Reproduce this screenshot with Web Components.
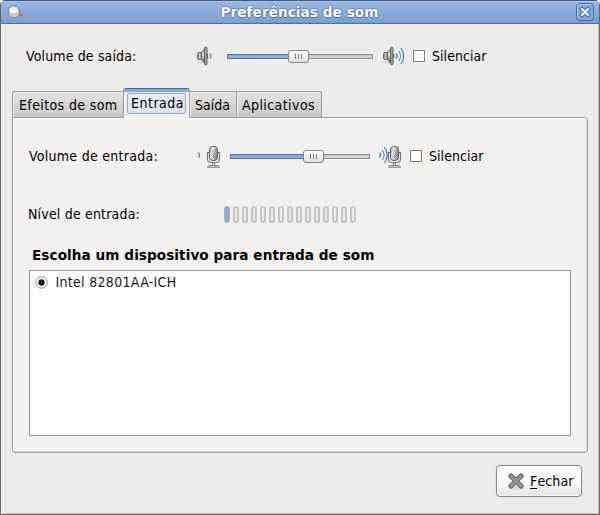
<!DOCTYPE html>
<html lang="pt-BR">
<head>
<meta charset="utf-8">
<title>Preferências de som</title>
<style>
body{margin:0;background:#fff;overflow:hidden;font:14px/18px "DejaVu Sans Condensed","DejaVu Sans",sans-serif;color:#000}
</style>
</head>
<body>
<sound-window></sound-window>
<script>
const define=(name,markup,setup)=>{
  const t=document.createElement('template');t.innerHTML=markup;
  customElements.define(name,class extends HTMLElement{
    connectedCallback(){
      if(this.shadowRoot)return;
      const r=this.attachShadow({mode:'open'});
      if(setup)setup(this,r,t);else r.append(t.content.cloneNode(true));
    }
  });
};
const build=(r,t)=>r.append(t.content.cloneNode(true));

/* Text label; the w attribute is the width the text is spaced to. */
define('ui-label',`<style>:host{display:block;white-space:pre}:host([bold]){font:bold 13.6px/18px "DejaVu Sans",sans-serif}span{display:inline-block}u{text-decoration:none;border-bottom:1px solid #000;display:inline-block;line-height:14px}</style><span></span>`,(h,r,t)=>{
  build(r,t);
  const s=r.querySelector('span'),text=h.getAttribute('text'),w=+h.getAttribute('w');
  if(h.hasAttribute('mnemonic')){const u=document.createElement('u');u.textContent=text[0];s.append(u,text.slice(1))}
  else s.textContent=text;
  s.style.letterSpacing=(w-s.getBoundingClientRect().width)/text.length+'px';
});

define('ui-slider',`<style>
:host{display:block;height:13px}
.g{display:grid;align-items:center;height:13px}
.track{grid-area:1/1;height:5px;box-sizing:border-box;border:1px solid #888a86;background:linear-gradient(#c5c5c3,#dededc);box-shadow:0 0 0 1px #f7f7f5}
.fill{grid-area:1/1;height:5px;box-sizing:border-box;border:1px solid #4a71a5;background:linear-gradient(#82a8dc,#98b8e4)}
.handle{grid-area:1/1;width:21px;height:13px;box-sizing:border-box;border:1px solid #858681;border-radius:3px;background:linear-gradient(#fff,#efefed 55%,#dfdfdd);display:flex;gap:2px;justify-content:center;align-items:center;z-index:1}
i{width:1px;height:5px;background:#7c7d79}
</style><div class="g"><div class="track"></div><div class="fill"></div><div class="handle"><i></i><i></i><i></i></div></div>`,(h,r,t)=>{
  build(r,t);const v=+h.getAttribute('value');
  r.querySelector('.fill').style.width=v+8+'px';
  r.querySelector('.handle').style.marginLeft=v+'px';
});

define('ui-check',`<style>:host{display:block;width:12px;height:12px;box-sizing:border-box;border:1px solid #74756f;background:#fff;box-shadow:0 0 0 1px #f8f8f7}</style>`);

define('ui-radio',`<style>:host{display:block;width:13px;height:13px}svg{display:block}</style><svg width="13" height="13"><circle cx="6.5" cy="6.5" r="5.7" fill="#fff" stroke="#92938f"/><circle cx="6.5" cy="6.5" r="3.2" fill="#1d1f20"/></svg>`);

const waves=(n,x,y)=>{
  let p='';const a=[[0,2.6,2],[2.6,5.2,4],[5,8,5.4]];
  for(let i=0;i<n;i++){const [d,h,b]=a[i];p+=`<path d="M${x+d} ${y-h}Q${x+d+b} ${y} ${x+d} ${y+h}" fill="none" stroke="${i===1?'#6d90c6':'#4c77b4'}" stroke-width="1.2"/>`}
  return p;
};
define('ui-speaker','<style>:host{display:block}svg{display:block}</style>',(h,r,t)=>{
  build(r,t);
  r.innerHTML+=`<svg width="23" height="20"><defs><linearGradient id="b"><stop stop-color="#50544e"/><stop offset=".5" stop-color="#d8dad5"/><stop offset="1" stop-color="#555a54"/></linearGradient><linearGradient id="c" x2="0" y2="1"><stop stop-color="#8c9188"/><stop offset=".45" stop-color="#e4e6e2"/><stop offset="1" stop-color="#2d322d"/></linearGradient></defs>
  <ellipse cx="6" cy="16" rx="6" ry="1.6" fill="#000" opacity=".09"/>
  <path d="M1 6.500Q-.3 10 1 13.500H5V6.500Z" fill="url(#b)" stroke="#5b5f59" stroke-width=".8"/>
  <path d="M4.500 6.500L8.500 2V18L4.500 13.500Z" fill="url(#c)" stroke="#50554d" stroke-width=".8"/>
  <rect x="7.600" y="1" width="2.400" height="18" rx="1.200" fill="#a6aaa0" stroke="#484d46" stroke-width=".8"/>
  <path d="M10.300 7.500Q12.300 10 10.300 13Z" fill="#2e332e"/>${waves(+h.getAttribute('level'),13,10)}</svg>`;
});
define('ui-mic','<style>:host{display:block}svg{display:block}</style>',(h,r,t)=>{
  build(r,t);
  r.innerHTML+=`<svg width="24" height="23"><defs><linearGradient id="m" x2="1" y2=".3"><stop stop-color="#7c8086"/><stop offset=".35" stop-color="#f6f7f8"/><stop offset="1" stop-color="#8b9096"/></linearGradient><pattern id="d" width="2" height="2" patternUnits="userSpaceOnUse"><path d="M0 0h1v1h-1zM1 1h1v1h-1z" fill="#50565c" opacity=".28"/></pattern></defs>
  <g transform="translate(-1 0)"><path d="M10.500 7.500V14Q10.500 17.500 14 17.500H19Q22.500 17.500 22.500 14V7.500" fill="none" stroke="#777a76" stroke-width="1.200"/>
  <rect x="12.500" y="1.500" width="8" height="14" rx="3.200" fill="url(#m)" stroke="#54585d"/><rect x="14" y="4" width="6" height="9" fill="url(#d)"/>
  <path d="M10 7.500h2.500M20.500 7.500h2.500" stroke="#666965"/>
  <path d="M15.500 17.500V20.500M17.500 17.500V20.500" stroke="#777a76"/><path d="M10.500 22.300L11.500 20.500H21.500L22.500 22.300Z" fill="#dfe0dd" stroke="#777a76" stroke-width=".9"/></g>
  ${waves(+h.getAttribute('level'),.5,10)}</svg>`;
});

define('ui-meter',`<style>:host{display:flex;gap:3px}i{width:6px;height:17px;box-sizing:border-box;border:2px solid #c5c5c3;border-radius:3px;background:#eeedeb}i:first-of-type{background:#84a9dc;border-color:#acb3bc;border-width:1px}</style>${'<i></i>'.repeat(15)}`);

define('ui-tab',`<style>
:host{display:block;box-sizing:border-box;height:26px;border:1px solid #9b9b98;border-bottom:0;border-left-width:0;border-radius:0 3px 0 0;background:linear-gradient(#e4e3e1,#c9c8c6);box-shadow:inset 0 1px #f1f0ef,inset 1px 0 #efeeed;padding-top:4px}
:host([first]){border-left-width:1px;border-radius:3px 0 0 0;border-right:0}
:host([mid]){border-radius:0}
:host([active]){height:30px;border:1px solid #9b9b98;border-top:1px solid #3d6aa5;border-bottom:0;border-radius:3px 3px 0 0;background:linear-gradient(#86abdc 0 3px,#f2f1ef 3px);box-shadow:none;padding:4px 3px 0 3px;margin-bottom:-1px;z-index:1}
.f{display:block}
:host([active]) .f{box-sizing:border-box;height:21px;border:1px solid #96a8ca;border-radius:2px;background:linear-gradient(#e9edf4,#dce2ee);padding:0 0 0 3px}
</style><span class="f"><slot></slot></span>`);

define('ui-button',`<style>:host{display:flex;align-items:center;box-sizing:border-box;width:86px;height:32px;border:1px solid #888986;border-radius:4px;background:linear-gradient(#fff,#f8f8f7 50%,#e7e6e4);box-shadow:inset 0 0 0 1px #fff9,0 0 0 1px #e4e3e1;padding-left:10px;gap:5px}svg{display:block}</style>
<svg width="18" height="20"><ellipse cx="10" cy="17" rx="8" ry="2" fill="#000" opacity=".07"/><path d="M4 5L14 15M14 5L4 15" stroke="#5d5f5b" stroke-width="5.200" stroke-linecap="round"/><path d="M4 5L14 15M14 5L4 15" stroke="#90928e" stroke-width="3.500" stroke-linecap="round"/></svg><slot></slot>`);

define('title-bar',`<style>
:host{display:grid;grid-template-columns:30px 1fr 30px;align-items:center;box-sizing:border-box;height:24px;border-top:1px solid #42597a;border-bottom:1px solid #4570a8;background:linear-gradient(#a9c5ec 0 1px,#98b7e3 1px,#7b9fd0)}
.t{justify-self:center;color:#fff;margin-left:-1px;text-shadow:0 1px #4e73a8,1px 0 #5a80b5,-1px 0 #5a80b5,0 -1px #6a8fc4}
.x{box-sizing:border-box;width:18px;height:18px;justify-self:end;margin-right:5px}
svg{display:block}.k{margin-left:6px}
</style>
<svg class="k" width="17" height="14"><circle cx="7" cy="6.800" r="6.500" fill="#7b8795" opacity=".75"/><path d="M2 8Q2 12 6.500 12.300Q11 12 12 9L11 4L3 4Z" fill="#cacbc2"/><ellipse cx="6.800" cy="5" rx="4.600" ry="3.600" fill="#f2f2eb"/><circle cx="14" cy="9.800" r="1.400" fill="#dd5447"/></svg>
<span class="t"><ui-label bold text="Preferências de som" w="158"></ui-label></span>
<svg class="x" width="18" height="18"><rect x=".5" y=".5" width="17" height="17" rx="3" fill="#86a9da" stroke="#44699d"/><path d="M1.500 15V2.500Q1.500 1.500 3 1.500H15" fill="none" stroke="#a8c5ee"/><path d="M6 6L12 12M12 6L6 12" stroke="#486ea4" stroke-width="4.200" stroke-linecap="square"/><path d="M6 6L12 12M12 6L6 12" stroke="#eef4fc" stroke-width="2.200" stroke-linecap="square"/></svg>`);

define('sound-window',`<style>
:host{display:block;box-sizing:border-box;width:600px;height:515px;border:1px solid #686562;border-top:0;border-radius:5px 5px 0 0;background:#edeceb;box-shadow:inset 1px 0 #fafafa,inset -1px -1px #c5c3c1;overflow:hidden}
.row{display:grid;align-items:center;height:24px}
.out{grid-template-columns:171px 30px 146px 10px 30px 19px 1fr;padding:20px 0 0 25px}
.in{grid-template-columns:169px 32px 140px 9px 31px 19px 1fr;padding:26px 0 0 16px}
.lvl{grid-template-columns:196px 1fr;padding:34px 0 0 15px}
.tabs{display:flex;align-items:flex-end;padding:19px 0 0 11px;height:30px}
.panel{margin:0 11px;box-sizing:border-box;width:576px;height:336px;border:1px solid #9b9b98;border-radius:0 3px 3px 3px;background:#f2f1ef;box-shadow:inset 1px 1px #fff,inset -1px -1px #dfdedc}
.head{padding:20px 0 0 19px}
.list{box-sizing:border-box;margin:6px 0 0 16px;width:542px;height:166px;border:1px solid #9c9c99;background:#fff;display:flex;align-items:flex-start;gap:7.500px;padding:5px 0 0 5px}
.list ui-label{margin-top:-3px;color:#1a1a1a}
.list ui-radio{margin-top:0}
.foot{display:flex;justify-content:flex-end;padding:12px 17px 0 0}
.tabs ui-label{margin-left:6px}
.tabs [active] ui-label{margin-left:0}
</style>
<title-bar></title-bar>
<div class="row out"><ui-label text="Volume de saída:" w="110.500"></ui-label><ui-speaker level="1"></ui-speaker><ui-slider value="61"></ui-slider><i></i><ui-speaker level="3"></ui-speaker><ui-check></ui-check><ui-label text="Silenciar" w="54.500"></ui-label></div>
<div class="tabs">
<ui-tab first style="width:111px"><ui-label text="Efeitos de som" w="98.500"></ui-label></ui-tab>
<ui-tab active style="width:67px"><ui-label text="Entrada" w="53"></ui-label></ui-tab>
<ui-tab mid style="width:47px"><ui-label style="margin-left:5px" text="Saída" w="35"></ui-label></ui-tab>
<ui-tab style="width:85px"><ui-label style="margin-left:5px" text="Aplicativos" w="73"></ui-label></ui-tab>
</div>
<div class="panel">
<div class="row in"><ui-label text="Volume de entrada:" w="129"></ui-label><ui-mic level="1"></ui-mic><ui-slider value="73"></ui-slider><i></i><ui-mic level="3"></ui-mic><ui-check></ui-check><ui-label text="Silenciar" w="54.500"></ui-label></div>
<div class="row lvl"><ui-label text="Nível de entrada:" w="112"></ui-label><ui-meter></ui-meter></div>
<div class="head"><ui-label bold text="Escolha um dispositivo para entrada de som" w="342.500"></ui-label></div>
<div class="list"><ui-radio></ui-radio><ui-label text="Intel 82801AA-ICH" w="121"></ui-label></div>
</div>
<div class="foot"><ui-button><ui-label mnemonic text="Fechar" w="43.500"></ui-label></ui-button></div>`);
</script>
</body>
</html>
